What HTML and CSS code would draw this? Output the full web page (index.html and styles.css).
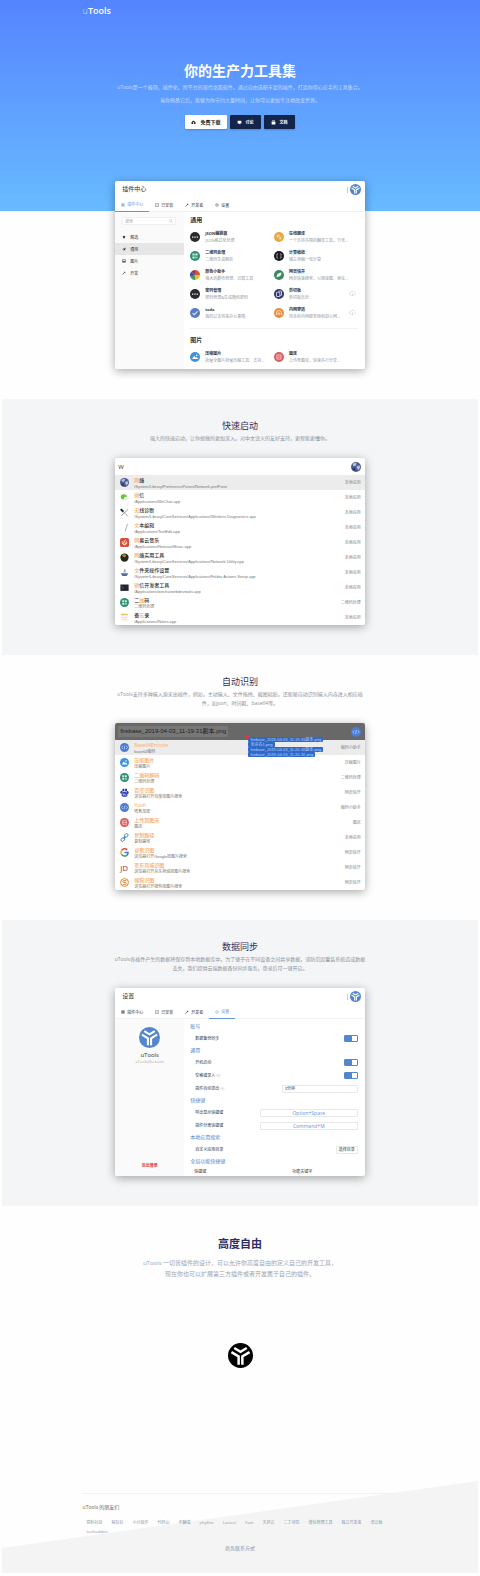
FILE: index.html
```
<!DOCTYPE html>
<html lang="zh-CN"><head>
<meta charset="utf-8">
<title>uTools</title>
<meta name="viewport" content="width=device-width, initial-scale=1">
<link rel="stylesheet" href="styles.css">
</head><body>
<svg class="defs">
<symbol id="logo" viewBox="0 0 24 24"><circle cx="12" cy="12" r="12" fill="currentColor"/><path d="M3.3 8.8L10.2 12.9V20.8M20.7 8.8L13.8 12.9V20.8M6 4.8L12 8.4L18 4.8" fill="none" stroke="#fff" stroke-width="2.4"/></symbol>
<symbol id="cloud" viewBox="0 0 24 24"><path d="M6 19a5 5 0 0 1-1-9.900a7 7 0 0 1 13.600 0A5 5 0 0 1 18 19h-4v-5h3l-5-5-5 5h3v5z" fill="currentColor"/></symbol>
<symbol id="chat" viewBox="0 0 24 24"><path d="M3 4h18v13h-6v5l-6-5H3z" fill="currentColor"/></symbol>
<symbol id="book" viewBox="0 0 24 24"><path d="M5 2h14v3H5zM3 7h18v14H3z" fill="currentColor"/></symbol>
<symbol id="plugin" viewBox="0 0 24 24"><path d="M4 4h7v7H4zM14 4h6v6h-6zM4 14h6v6H4zM14 14h6v6h-6z" fill="none" stroke="currentColor" stroke-width="3"/></symbol>
<symbol id="check" viewBox="0 0 24 24"><path d="M3 3h18v18H3zM8 12l3 3 6-6" fill="none" stroke="currentColor" stroke-width="2"/></symbol>
<symbol id="wrench" viewBox="0 0 24 24"><path d="M3 21L14 10" stroke="currentColor" stroke-width="4"/><path d="M12 8l6-6-1 5 5-1-6 7z" fill="currentColor"/></symbol>
<symbol id="gear" viewBox="0 0 24 24"><circle cx="12" cy="12" r="9" fill="none" stroke="currentColor" stroke-width="2"/><circle cx="12" cy="12" r="3" fill="none" stroke="currentColor" stroke-width="2"/></symbol>
<symbol id="search" viewBox="0 0 24 24"><circle cx="10" cy="10" r="7" fill="none" stroke="currentColor" stroke-width="2"/><path d="M15 15l6 6" stroke="currentColor" stroke-width="2"/></symbol>
<symbol id="star" viewBox="0 0 24 24"><path d="M12 2l3 6 7 1-5 5 1 7-6-3-6 3 1-7-5-5 7-1z" fill="currentColor"/></symbol>
<symbol id="plane" viewBox="0 0 24 24"><path d="M22 3L1 13l6 2zM22 3L9 16v6l4-4 5 3z" fill="currentColor"/></symbol>
<symbol id="image" viewBox="0 0 24 24"><path d="M3 4h18v16H3z" fill="none" stroke="currentColor" stroke-width="3"/><path d="M4 18l5-7 4 4 3-3 4 6z" fill="currentColor"/></symbol>
<symbol id="dots" viewBox="0 0 24 24"><circle cx="12" cy="12" r="12" fill="#2b2b2d"/><path d="M5 12h3M10.500 12h3M16 12h3" stroke="#fff" stroke-width="3"/></symbol>
<symbol id="translate" viewBox="0 0 24 24"><circle cx="12" cy="12" r="12" fill="#e9a63c"/><path d="M6 6h8v8H6zM11 11h7v7h-7z" fill="#f8dca8" stroke="#e9a63c"/></symbol>
<symbol id="qr" viewBox="0 0 24 24"><circle cx="12" cy="12" r="12" fill="#2f9170"/><path d="M6 6h5v5H6zM13 6h5v5h-5zM6 13h5v5H6zM13 13h2v5h-2zM16 14h2v3h-2z" fill="#d9f1e7"/></symbol>
<symbol id="calc" viewBox="0 0 24 24"><circle cx="12" cy="12" r="12" fill="#17181a"/><path d="M10 7H7v10h3M14 7h3v10h-3" fill="none" stroke="#ddd" stroke-width="1.500"/></symbol>
<symbol id="wheel" viewBox="0 0 24 24"><path d="M12 12V0A12 12 0 0 1 24 12z" fill="#ca5a35"/><path d="M12 12h12A12 12 0 0 1 12 24z" fill="#e9bf30"/><path d="M12 12v12A12 12 0 0 1 1 17z" fill="#42995d"/><path d="M12 12L1 17A12 12 0 0 1 3 4z" fill="#2758b4"/><path d="M12 12L3 4A12 12 0 0 1 12 0z" fill="#9d2d48"/></symbol>
<symbol id="feather" viewBox="0 0 24 24"><circle cx="12" cy="12" r="12" fill="#388b5d"/><path d="M6 18c0-7 4-11 12-12c0 7-4 10-9 10z" fill="#fff"/></symbol>
<symbol id="clip" viewBox="0 0 24 24"><circle cx="12" cy="12" r="12" fill="#32386b"/><path d="M6 8h8v10H6zM10 5h8v10h-4" fill="none" stroke="#dcdff8" stroke-width="2"/></symbol>
<symbol id="todo" viewBox="0 0 24 24"><circle cx="12" cy="12" r="12" fill="#5a7bc4"/><path d="M6 12l4 4 8-8" fill="none" stroke="#dfe8ff" stroke-width="2.500"/></symbol>
<symbol id="tunnel" viewBox="0 0 24 24"><circle cx="12" cy="12" r="12" fill="#eb8c3c"/><path d="M6 17v-5a6 6 0 0 1 12 0v5M10 17v-5h4v5" fill="none" stroke="#fde5cf" stroke-width="2"/></symbol>
<symbol id="get" viewBox="0 0 24 24"><path d="M7 18a5 5 0 0 1-1-9.900a7 7 0 0 1 13 1A5 5 0 0 1 18 18M12 11v10M9 18l3 3 3-3" fill="none" stroke="currentColor" stroke-width="2"/></symbol>
<symbol id="photo" viewBox="0 0 24 24"><circle cx="12" cy="12" r="12" fill="#3f91da"/><path d="M5 17l5-8 4 5 2-2 4 5z" fill="#fff"/><circle cx="16" cy="8" r="2" fill="#fff"/></symbol>
<symbol id="bed" viewBox="0 0 24 24"><circle cx="12" cy="12" r="12" fill="#d95d60"/><path d="M7 7h10v10H7zM7 12h10" fill="none" stroke="#f6c9c9" stroke-width="2"/></symbol>
<symbol id="code" viewBox="0 0 24 24"><circle cx="12" cy="12" r="12" fill="#4b7dd9"/><path d="M8 8l-4 4 4 4M16 8l4 4-4 4M13 7l-2 10" fill="none" stroke="#dce8ff" stroke-width="1.500"/></symbol>
<symbol id="globe" viewBox="0 0 24 24"><circle cx="12" cy="12" r="12" fill="#4c5c91"/><path d="M4 6c4-5 8-4 10-2l-3 5-5 1zM13 11l7-3 2 6-5 6z" fill="#b9c4df"/><path d="M3 15l6 0 2 6c-4 0-7-3-8-6z" fill="#26335f"/></symbol>
<symbol id="wechat" viewBox="0 0 24 24"><ellipse cx="10" cy="10" rx="8" ry="7" fill="#65c23c"/><ellipse cx="16" cy="15" rx="6" ry="5" fill="#edf5e9"/></symbol>
<symbol id="tools" viewBox="0 0 24 24"><path d="M2 3l7 7" stroke="#222" stroke-width="5"/><path d="M9 10l12 12M3 21L21 4" stroke="#7d827c" stroke-width="2"/></symbol>
<symbol id="pen" viewBox="0 0 24 24"><path d="M14 22L20 2" stroke="#8e95a5" stroke-width="2"/></symbol>
<symbol id="music" viewBox="0 0 24 24"><rect width="24" height="24" rx="5" fill="#db4c36"/><path d="M15 5c-3 0-3 3-2 7M8 8a6 6 0 1 0 9 1M12 11a3 3 0 1 0 3 2" fill="none" stroke="#fff" stroke-width="2"/></symbol>
<symbol id="ball" viewBox="0 0 24 24"><circle cx="12" cy="12" r="11" fill="#292818"/><path d="M5 7c4-5 9-4 12-1l-4 6z" fill="#a68b3a"/></symbol>
<symbol id="ship" viewBox="0 0 24 24"><path d="M2 14h20l-4 7H6z" fill="#566c9b"/><path d="M11 3h4v9H9z" fill="#9caac5"/></symbol>
<symbol id="term" viewBox="0 0 24 24"><path d="M1 4h22v17H1z" fill="#20242d"/><path d="M5 9l3 3-3 3" stroke="#7987a5" fill="none" stroke-width="2"/></symbol>
<symbol id="note" viewBox="0 0 24 24"><path d="M3 2h18v20H3z" fill="#f7f6f2"/><path d="M3 2h18v4H3z" fill="#f0c067"/><path d="M5 12h14M5 17h14" stroke="#ccc"/></symbol>
<symbol id="paw" viewBox="0 0 24 24"><g fill="#2636b8"><ellipse cx="4" cy="11" rx="3" ry="4"/><ellipse cx="9" cy="5" rx="3" ry="4"/><ellipse cx="16" cy="5" rx="3" ry="4"/><ellipse cx="20" cy="12" rx="3" ry="4"/><path d="M12 10c3 0 8 6 8 9c0 4-4 4-8 4s-8 0-8-4c0-3 5-9 8-9z"/></g><path d="M8 15v4h3v-4M13 15v4h4" fill="none" stroke="#fff" stroke-width="1.500"/></symbol>
<symbol id="link" viewBox="0 0 24 24"><g fill="none" stroke="#3b7fcd" stroke-width="2.500"><rect x="11" y="3" width="11" height="8" rx="4" transform="rotate(-45 16 7)"/><rect x="2" y="13" width="11" height="8" rx="4" transform="rotate(-45 8 17)"/><path d="M9 15l6-6"/></g></symbol>
<symbol id="google" viewBox="0 0 24 24"><g fill="none" stroke-width="4"><path d="M4 7A9.500 9.500 0 0 1 19 5" stroke="#e04a3a"/><path d="M4 7a9.500 9.500 0 0 0 0 10" stroke="#efb72b"/><path d="M4 17a9.500 9.500 0 0 0 14 2.500" stroke="#38a456"/><path d="M12 12h9.500c0 3-1 6-3.500 7.500" stroke="#4477d9"/></g></symbol>
<symbol id="sogou" viewBox="0 0 24 24"><circle cx="12" cy="12" r="10.500" fill="none" stroke="#de7d25" stroke-width="2.500"/><path d="M17 7H10q-3 0-3 2.500t3 2.500h4q3 0 3 2.500t-3 2.500H7" fill="none" stroke="#de7d25" stroke-width="2.500"/></symbol>
</svg>

<header class="hero">
<nav class="nav"><a href="#" class="brand"><span>u</span>Tools</a></nav>
<h1>你的生产力工具集</h1>
<p>uTools是一个极简、插件化、跨平台的现代桌面软件。通过自由选配丰富的插件，打造你得心应手的工具集合。<br>当你熟悉它后，能够为你节约大量时间，让你可以更加专注地改变世界。</p>
<div class="actions">
<button class="btn btn-white"><svg><use href="#cloud"/></svg>免费下载</button>
<button class="btn"><svg><use href="#chat"/></svg>讨论</button>
<button class="btn"><svg><use href="#book"/></svg>文档</button>
</div>

<div class="window">
<div class="bar"><span>插件中心</span><i class="menu"></i><svg class="avatar"><use href="#logo"/></svg></div>
<nav class="tabs">
<a href="#" class="active"><svg><use href="#plugin"/></svg>插件中心</a>
<a href="#"><svg><use href="#check"/></svg>已安装</a>
<a href="#"><svg><use href="#wrench"/></svg>开发者</a>
<a href="#"><svg><use href="#gear"/></svg>设置</a>
</nav>
<div class="panes">
<aside class="side">
<label class="search"><input type="text" placeholder="搜索" aria-label="搜索"><svg><use href="#search"/></svg></label>
<a href="#"><svg><use href="#star"/></svg>精选</a>
<a href="#" class="active"><svg><use href="#plane"/></svg>通用</a>
<a href="#"><svg><use href="#image"/></svg>图片</a>
<a href="#"><svg><use href="#wrench"/></svg>开发</a>
</aside>
<div class="store">
<h3>通用</h3>
<ul class="plugins">
<li><svg><use href="#dots"/></svg><div><b>JSON编辑器</b><small>JSON格式化处理</small></div></li>
<li><svg><use href="#translate"/></svg><div><b>在线翻译</b><small>一个支持多国的翻译工具，节省...</small></div></li>
<li><svg><use href="#qr"/></svg><div><b>二维码处理</b><small>二维码生成解析</small></div></li>
<li><svg><use href="#calc"/></svg><div><b>计算稿纸</b><small>输左草稿一张计算</small></div></li>
<li><svg><use href="#wheel"/></svg><div><b>颜色小助手</b><small>强大的颜色管理、识取工具</small></div></li>
<li><svg><use href="#feather"/></svg><div><b>网页快开</b><small>网页快速搜索，以链接图、地址...</small></div></li>
<li><svg><use href="#dots"/></svg><div><b>密码管理</b><small>密码管理&amp;生成随机密码</small></div></li>
<li><svg><use href="#clip"/></svg><div><b>剪切板</b><small>剪切板历史</small></div><svg class="get"><use href="#get"/></svg></li>
<li><svg><use href="#todo"/></svg><div><b>todo</b><small>我的过去将来办公事情</small></div></li>
<li><svg><use href="#tunnel"/></svg><div><b>内网穿透</b><small>将本机内网服务映射到公网...</small></div><svg class="get"><use href="#get"/></svg></li>
</ul>
<h3 class="ruled">图片</h3>
<ul class="plugins">
<li><svg><use href="#photo"/></svg><div><b>压缩图片</b><small>批量全图片批量压缩工具、支持...</small></div></li>
<li><svg><use href="#bed"/></svg><div><b>图床</b><small>上传至图床，快速多行分享...</small></div></li>
</ul>
</div>
</div>
</div>
</header>

<section class="feature gray">
<h2>快速启动</h2>
<p>强大的快速启动，让你想做的更加深入。对中文语义的友好支持，更智能更懂你。</p>
<div class="window">
<div class="bar bar-search"><input type="text" value="W" aria-label="关键字"><svg class="avatar"><use href="#globe"/></svg></div>
<ul class="results">
<li class="active"><svg><use href="#globe"/></svg><div><b><em>网</em>络</b><small>/System/Library/PreferencePanes/Network.prefPane</small></div><span>本地应用</span></li>
<li><svg><use href="#wechat"/></svg><div><b><em>微</em>信</b><small>/Applications/WeChat.app</small></div><span>本地应用</span></li>
<li><svg><use href="#tools"/></svg><div><b><em>无</em>线诊断</b><small>/System/Library/CoreServices/Applications/Wireless Diagnostics.app</small></div><span>本地应用</span></li>
<li><svg><use href="#pen"/></svg><div><b><em>文</em>本编辑</b><small>/Applications/TextEdit.app</small></div><span>本地应用</span></li>
<li><svg><use href="#music"/></svg><div><b><em>网</em>易云音乐</b><small>/Applications/NeteaseMusic.app</small></div><span>本地应用</span></li>
<li><svg><use href="#ball"/></svg><div><b><em>网</em>络实用工具</b><small>/System/Library/CoreServices/Applications/Network Utility.app</small></div><span>本地应用</span></li>
<li><svg><use href="#ship"/></svg><div><b><em>文</em>件夹操作设置</b><small>/System/Library/CoreServices/Applications/Folder Actions Setup.app</small></div><span>本地应用</span></li>
<li><svg><use href="#term"/></svg><div><b><em>微</em>信开发者工具</b><small>/Applications/wechatwebdevtools.app</small></div><span>本地应用</span></li>
<li><svg><use href="#qr"/></svg><div><b>二<em>维</em>码</b><small>二维码处理</small></div><span>二维码处理</span></li>
<li><svg><use href="#note"/></svg><div><b>备<em>忘</em>录</b><small>/Applications/Notes.app</small></div><span>本地应用</span></li>
</ul>
</div>
</section>

<section class="feature">
<h2>自动识别</h2>
<p>uTools支持多种输入源来出插件，例如，主动输入、文件拖拽、截图粘贴，还能够自动识别输入内容进入相应插<br>件，如json、时间戳、base64等。</p>
<div class="window">
<div class="bar bar-dark"><span class="chip">firebase_2019-04-03_11-19-31副本.png</span><svg class="avatar"><use href="#code"/></svg></div>
<ul class="results orange">
<li class="active"><svg><use href="#code"/></svg><div><b>Base64Encode</b><small>base64编码</small></div><span>编码小助手</span></li>
<li><svg><use href="#photo"/></svg><div><b>压缩图片</b><small>压缩图片</small></div><span>压缩图片</span></li>
<li><svg><use href="#qr"/></svg><div><b>二维码解码</b><small>二维码处理</small></div><span>二维码处理</span></li>
<li><svg><use href="#paw"/></svg><div><b>百度识图</b><small>浏览器打开百度按图片搜索</small></div><span>网页快开</span></li>
<li><svg><use href="#code"/></svg><div><b>Hash</b><small>哈希加密</small></div><span>编码小助手</span></li>
<li><svg><use href="#bed"/></svg><div><b>上传到图床</b><small>图床</small></div><span>图床</span></li>
<li><svg><use href="#link"/></svg><div><b>复制路径</b><small>复制路径</small></div><span>本地应用</span></li>
<li><svg><use href="#google"/></svg><div><b>谷歌识图</b><small>浏览器打开Google按图片搜索</small></div><span>网页快开</span></li>
<li><i class="jd">JD</i><div><b>京东商城识图</b><small>浏览器打开京东商城按图片搜索</small></div><span>网页快开</span></li>
<li><svg><use href="#sogou"/></svg><div><b>搜狗识图</b><small>浏览器打开搜狗按图片搜索</small></div><span>网页快开</span></li>
</ul>
<div class="drag">
<i class="count"></i>
<span>firebase_2019-04-03_11-19-31副本.png</span>
<span>未命名1.png</span>
<span>firebase_2019-04-03_11-20-32副本.png</span>
<span>firebase_2019-04-03_11-20-32.png</span>
</div>
</div>
</section>

<section class="feature gray">
<h2>数据同步</h2>
<p>uTools各插件产生的数据将保存到本地数据库中。为了便于在不同设备之间共享数据，或防范因重装系统造成数据<br>丢失，我们提供云端数据备份同步服务，登录后可一键开启。</p>
<div class="window">
<div class="bar"><span>设置</span><i class="menu"></i><svg class="avatar"><use href="#logo"/></svg></div>
<nav class="tabs">
<a href="#"><svg><use href="#plugin"/></svg>插件中心</a>
<a href="#"><svg><use href="#check"/></svg>已安装</a>
<a href="#"><svg><use href="#wrench"/></svg>开发者</a>
<a href="#" class="active"><svg><use href="#gear"/></svg>设置</a>
</nav>
<div class="panes">
<aside class="side account">
<svg><use href="#logo"/></svg>
<strong>uTools</strong>
<small>uTools@u.tools</small>
<button>退出登录</button>
</aside>
<form class="settings">
<h4>账号</h4>
<div><label for="sync">数据备份同步</label><span class="switch"><input type="checkbox" id="sync" checked></span></div>
<h4>通用</h4>
<div><label for="boot">开机启动</label><span class="switch"><input type="checkbox" id="boot" checked></span></div>
<div><label for="space">空格键录入 ⓘ</label><span class="switch"><input type="checkbox" id="space" checked></span></div>
<div><label for="quit">插件自动退出 ⓘ</label><select id="quit"><option>3分钟</option></select></div>
<h4>快捷键</h4>
<div><label for="show">呼出显示快捷键</label><input class="key" type="text" id="show" value="Option+Space"></div>
<div><label for="detach">插件分离快捷键</label><input class="key" type="text" id="detach" value="Command+M"></div>
<h4>本地应用搜索</h4>
<div><span>自定义应用目录</span><button type="button">选择目录</button></div>
<h4>全局功能快捷键</h4>
<table><tr><th>快捷键</th><th>功能关键字</th></tr></table>
</form>
</div>
</div>
</section>

<section class="free">
<h2>高度自由</h2>
<p>uTools 一切皆插件的设计，可以允许你高度自由的定义自己的开发工具，<br>现在你也可以扩展第三方插件或者开发属于自己的插件。</p>
<svg><use href="#logo"/></svg>
</section>

<footer class="footer">
<div class="friends">
<h5>uTools 的朋友们</h5>
<ul>
<li><a href="#">猿料社区</a></li>
<li><a href="#">程玩社</a></li>
<li><a href="#">小众软件</a></li>
<li><a href="#">代码山</a></li>
<li><a href="#">不翻墙</a></li>
<li><a href="#">phpEnv</a></li>
<li><a href="#">Laravel</a></li>
<li><a href="#">Vant</a></li>
<li><a href="#">天祥云</a></li>
<li><a href="#">二丁动性</a></li>
<li><a href="#">微信管理工具</a></li>
<li><a href="#">独立开发者</a></li>
<li><a href="#">语云鲸</a></li>
<li><a href="#">toolsaddon</a></li>
</ul>
</div>
<a href="#" class="contact">商务联系方式</a>
</footer>
</body></html>
```

FILE: styles.css
```
* {
	box-sizing: border-box;
}

body {
	margin: 0;
	background: #fefefe;
	color: #333;
	font: 4px/5px "Open Sans", "Noto Sans CJK SC", sans-serif;
}

h1, h2, h3, h4, h5, p, ul {
	margin: 0;
	padding: 0;
}

ul {
	list-style: none;
}

a {
	color: inherit;
	text-decoration: none;
}

button, input, select {
	margin: 0;
	padding: 0;
	border: 0;
	background: none;
	color: inherit;
	font: inherit;
}

small {
	font-size: inherit;
}

.defs {
	display: none;
}

/* hero */

.hero {
	display: flex;
	flex-direction: column;
	align-items: center;
	padding-bottom: 30px;
	background: linear-gradient(#5584ff, #68bbff) no-repeat;
	background-size: 100% 211px;
	text-align: center;
}

.nav {
	width: 66%;
	padding-left: 1px;
	text-align: left;
}

.brand {
	color: #fff;
	font-size: 9px;
	font-weight: 600;
	line-height: 22px;
}

.brand span {
	font-weight: 300;
	opacity: .7;
}

h1 {
	margin-top: 40px;
	color: #fff;
	font-size: 14px;
	line-height: 18px;
}

.hero > p {
	margin-top: 1px;
	color: rgba(255, 255, 255, .65);
	font-size: 5px;
	line-height: 13px;
	white-space: nowrap;
}

.actions {
	display: flex;
	gap: 3px;
	margin: 8px 0 52px;
}

.btn {
	display: flex;
	align-items: center;
	gap: 4px;
	height: 14px;
	padding: 0 7px;
	border-radius: 1px;
	background: #14254c;
	color: #fff;
	font-size: 4px;
	font-weight: 700;
	box-shadow: 0 1px 2px rgba(0, 0, 0, .2);
}

.btn-white {
	padding: 0 6px;
	background: #fff;
	color: #222;
	font-size: 5px;
}

.btn svg {
	width: 5px;
	height: 5px;
}

/* app windows */

.window {
	position: relative;
	width: 52%;
	border-radius: 2px;
	background: #fff;
	box-shadow: 0 2px 10px rgba(0, 0, 0, .35);
	text-align: left;
}

.bar {
	display: flex;
	align-items: center;
	height: 17px;
	padding: 0 4px 0 7px;
	font-size: 6px;
}

.menu {
	width: 1px;
	height: 6px;
	margin: 0 2px 0 auto;
	background: #ccc;
}

.avatar {
	width: 11px;
	height: 11px;
	color: #5386cc;
}

.bar-search {
	padding-left: 3px;
}

.bar-search input {
	flex: 1;
	min-width: 0;
}

.bar-search .avatar, .bar-dark .avatar {
	width: 10px;
	height: 10px;
}

.bar-dark {
	justify-content: space-between;
	padding-left: 3px;
	border-radius: 2px 2px 0 0;
	background: #686868;
}

.chip {
	padding: 2px;
	border-radius: 1px;
	background: #777;
	color: #222;
	font-family: "Liberation Sans", "Noto Sans CJK SC", sans-serif;
	line-height: 7px;
}

.tabs {
	display: flex;
	height: 14px;
	border-bottom: 1px solid #f2f2f2;
}

.tabs a {
	display: flex;
	align-items: center;
	gap: 2px;
	margin-bottom: -1px;
	padding: 0 6px;
}

.tabs a.active {
	border-bottom: 1px solid #6a94d8;
	color: #6a94d8;
}

.tabs svg, .side a svg {
	width: 4px;
	height: 4px;
}

.panes {
	display: flex;
	min-height: 156px;
}

.side {
	flex: 0 0 69px;
	min-width: 0;
	border-radius: 0 0 0 2px;
	background: #fafafa;
}

.side a {
	display: flex;
	align-items: center;
	gap: 4px;
	height: 12px;
	padding-left: 7px;
}

.side a.active {
	background: #e6e6e6;
}

.search {
	display: flex;
	align-items: center;
	margin: 5px 8px 6px 7px;
	padding: 0 2px;
	border: 1px solid #f0f0f0;
	border-radius: 1px;
	background: #fff;
	color: #999;
}

.search input {
	flex: 1;
	min-width: 0;
	height: 6px;
}

.search input::placeholder {
	color: #aaa;
}

.search svg {
	width: 4px;
	height: 4px;
}

.store {
	flex: 1;
	min-width: 0;
	padding: 2px 7px 3px 6px;
}

.store h3 {
	font-size: 6px;
	line-height: 13px;
}

.store .ruled {
	margin-top: 6px;
	padding-top: 5px;
	border-top: 1px solid #f0f0f0;
}

.plugins {
	display: grid;
	grid-template-columns: 1fr 1fr;
}

.plugins li {
	display: flex;
	align-items: center;
	gap: 5px;
	height: 19px;
	line-height: 7px;
	white-space: nowrap;
}

.plugins svg {
	flex: none;
	width: 10px;
	height: 10px;
}

.plugins b, .plugins small, .results b, .results small {
	display: block;
}

.plugins small {
	color: #999;
}

.plugins .get {
	width: 7px;
	height: 7px;
	margin: 0 2px 0 auto;
	color: #ccc;
}

/* feature sections */

.feature {
	display: flex;
	flex-direction: column;
	align-items: center;
	padding: 20px 0 30px;
	text-align: center;
}

.gray {
	background: linear-gradient(#f4f5f6, #f4f5f6) no-repeat center;
	background-size: calc(100% - 4px) 100%;
}

.feature h2 {
	color: #32325d;
	font-size: 9px;
	font-weight: 400;
	line-height: 14px;
}

.feature > p {
	margin: 1px 0 15px;
	color: #8f949c;
	font-size: 5px;
	line-height: 9px;
	white-space: nowrap;
}

.results li {
	display: flex;
	align-items: center;
	gap: 5px;
	height: 15px;
	padding: 0 4px 0 5px;
}

.results li.active {
	background: #ececec;
}

.results svg {
	width: 9px;
	height: 9px;
}

.results b {
	font-size: 5px;
	font-weight: 500;
	line-height: 7px;
}

.results em, .orange b {
	color: #f8ac6b;
	font-style: normal;
}

.results small {
	color: #777;
	font-family: "Liberation Sans", "Noto Sans CJK SC", sans-serif;
}

.results span {
	margin-left: auto;
	color: #888;
}

.jd {
	width: 9px;
	color: #a8323c;
	font: 8px/9px "Open Sans", sans-serif;
}

/* files dragged over the search bar */

.drag {
	position: absolute;
	top: 14px;
	left: 51%;
	display: flex;
	flex-direction: column;
	align-items: flex-start;
	padding-left: 6px;
}

.drag span {
	padding: 0 2px;
	border-radius: 1px;
	background: #2f68c8;
	color: #bcd2f6;
	font-family: "Liberation Sans", "Noto Sans CJK SC", sans-serif;
}

.count {
	position: absolute;
	top: -2px;
	left: 3px;
	width: 4px;
	height: 4px;
	border-radius: 50%;
	background: #e0393b;
}

/* settings */

.account {
	display: flex;
	flex-direction: column;
	align-items: center;
	padding: 8px 0;
}

.account svg {
	width: 21px;
	height: 21px;
	color: #5386cc;
}

.account strong {
	margin-top: 3px;
	font-size: 6px;
	font-weight: 400;
	line-height: 8px;
}

.account small {
	color: #aaa;
}

.account button {
	margin-top: auto;
	color: #e23c45;
	font-weight: 700;
}

.settings {
	flex: 1;
	padding: 2px 7px 0 6px;
}

.settings h4 {
	color: #4f86cd;
	font-size: 5px;
	font-weight: 400;
	line-height: 11px;
}

.settings div {
	display: flex;
	align-items: center;
	justify-content: space-between;
	height: 13px;
	padding-left: 5px;
}

.switch input {
	display: block;
	width: 14px;
	height: 7px;
	border: 1px solid #5386cc;
	border-radius: 1px;
	background: linear-gradient(90deg, #5386cc 55%, #fff 55%);
	appearance: none;
}

.settings select, .settings .key, .settings div button {
	height: 8px;
	border: 1px solid #e8e8e8;
	border-radius: 1px;
	background: #fff;
}

.settings select {
	width: 76px;
	padding: 0 2px;
	appearance: none;
}

.settings .key {
	width: 98px;
	color: #6a94d8;
	font-size: 5px;
	text-align: center;
}

.settings div button {
	padding: 0 2px;
}

.settings table {
	width: 100%;
	padding-left: 4px;
	border-spacing: 0;
}

.settings th {
	width: 60%;
	padding: 2px 0;
	font-weight: 400;
	text-align: left;
}

.settings th + th {
	width: 40%;
}

/* closing part */

.free {
	display: flex;
	flex-direction: column;
	align-items: center;
	padding: 30px 0 113px;
	text-align: center;
}

.free h2 {
	color: #2c2c66;
	font-size: 11px;
	line-height: 16px;
}

.free p {
	margin: 6px 0 63px;
	color: #a0a4ac;
	font-size: 6px;
	line-height: 11px;
	white-space: nowrap;
}

.free svg {
	width: 25px;
	height: 25px;
	color: #000;
}

.footer {
	position: relative;
	z-index: 0;
	padding: 12px 17% 20px;
	color: #8898aa;
	text-align: center;
}

.footer::before {
	position: absolute;
	z-index: -1;
	inset: 0 2px;
	background: #f4f4f5;
	clip-path: polygon(0 67px, 100% 0, 100% 100%, 0 100%);
	content: "";
}

.friends {
	padding: 9px 0 8px 1px;
	border-top: 1px solid #f1f1f1;
	text-align: left;
}

.friends h5 {
	color: #666;
	font-size: 5px;
	font-weight: 400;
	line-height: 8px;
}

.friends ul {
	display: flex;
	flex-wrap: wrap;
	column-gap: 9px;
	margin-top: 7px;
	padding: 0 4px;
	line-height: 9px;
}

.contact {
	font-size: 5px;
	line-height: 9px;
}
```
